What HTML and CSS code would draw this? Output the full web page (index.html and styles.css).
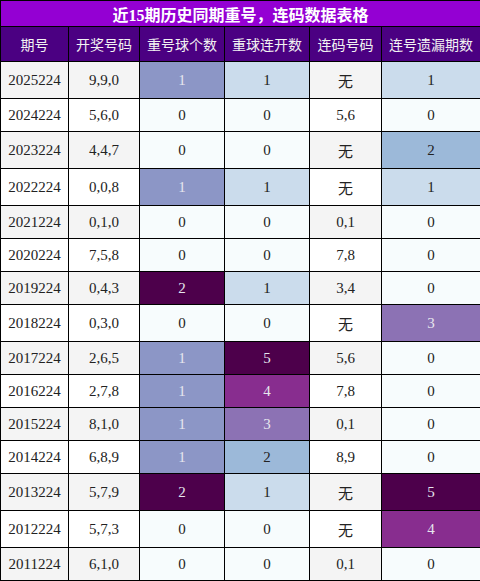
FILE: index.html
```html
<!DOCTYPE html>
<html lang="zh">
<head>
    <meta charset="UTF-8">
    <meta name="viewport" content="width=device-width, initial-scale=1.0">
    <title>近15期历史同期重号，连码数据表格</title>
    <link rel="stylesheet" href="styles.css">
</head>
<body>
<table class="data-table">
    <colgroup>
        <col class="c-issue">
        <col class="c-draw">
        <col class="c-repeat">
        <col class="c-streak">
        <col class="c-pair">
        <col class="c-miss">
    </colgroup>
    <thead>
        <tr><th class="title" colspan="6">近15期历史同期重号，连码数据表格</th></tr>
        <tr class="head">
            <th>期号</th>
            <th>开奖号码</th>
            <th>重号球个数</th>
            <th>重球连开数</th>
            <th>连码号码</th>
            <th>连号遗漏期数</th>
        </tr>
    </thead>
    <tbody>
        <tr><td>2025224</td><td>9,9,0</td><td class="b4 lt">1</td><td class="s1">1</td><td>无</td><td class="s1">1</td></tr>
        <tr><td>2024224</td><td>5,6,0</td><td class="z">0</td><td class="z">0</td><td>5,6</td><td class="z">0</td></tr>
        <tr><td>2023224</td><td>4,4,7</td><td class="z">0</td><td class="z">0</td><td>无</td><td class="s2">2</td></tr>
        <tr><td>2022224</td><td>0,0,8</td><td class="b4 lt">1</td><td class="s1">1</td><td>无</td><td class="s1">1</td></tr>
        <tr><td>2021224</td><td>0,1,0</td><td class="z">0</td><td class="z">0</td><td>0,1</td><td class="z">0</td></tr>
        <tr><td>2020224</td><td>7,5,8</td><td class="z">0</td><td class="z">0</td><td>7,8</td><td class="z">0</td></tr>
        <tr><td>2019224</td><td>0,4,3</td><td class="s5 lt">2</td><td class="s1">1</td><td>3,4</td><td class="z">0</td></tr>
        <tr><td>2018224</td><td>0,3,0</td><td class="z">0</td><td class="z">0</td><td>无</td><td class="s3 lt">3</td></tr>
        <tr><td>2017224</td><td>2,6,5</td><td class="b4 lt">1</td><td class="s5 lt">5</td><td>5,6</td><td class="z">0</td></tr>
        <tr><td>2016224</td><td>2,7,8</td><td class="b4 lt">1</td><td class="s4 lt">4</td><td>7,8</td><td class="z">0</td></tr>
        <tr><td>2015224</td><td>8,1,0</td><td class="b4 lt">1</td><td class="s3 lt">3</td><td>0,1</td><td class="z">0</td></tr>
        <tr><td>2014224</td><td>6,8,9</td><td class="b4 lt">1</td><td class="s2">2</td><td>8,9</td><td class="z">0</td></tr>
        <tr><td>2013224</td><td>5,7,9</td><td class="s5 lt">2</td><td class="s1">1</td><td>无</td><td class="s5 lt">5</td></tr>
        <tr><td>2012224</td><td>5,7,3</td><td class="z">0</td><td class="z">0</td><td>无</td><td class="s4 lt">4</td></tr>
        <tr><td>2011224</td><td>6,1,0</td><td class="z">0</td><td class="z">0</td><td>0,1</td><td class="z">0</td></tr>
    </tbody>
</table>
</body>
</html>
```
FILE: styles.css
```css
body {
    margin: 0;
    background: #fff;
    font-family: "Liberation Serif", "Noto Sans CJK SC", serif;
    color: #222;
}
.data-table {
    width: 480px;
    border-collapse: collapse;
    table-layout: fixed;
}
.c-issue  { width: 68px; }
.c-draw   { width: 71px; }
.c-repeat { width: 85px; }
.c-streak { width: 85px; }
.c-pair   { width: 72px; }
.c-miss   { width: 99px; }
.data-table th,
.data-table td {
    border: 1px solid #000;
    text-align: center;
}
.title {
    background: #9400d3;
    color: #fff;
    font-size: 16px;
    font-weight: bold;
    padding: 1px 0 0;
}
.head th {
    background: #4b0082;
    color: #f2f2f2;
    font-family: "Noto Sans CJK SC", sans-serif;
    font-size: 14px;
    font-weight: normal;
    padding: 7px 2px;
}
.data-table td {
    font-size: 15px;
    padding: 7.5px 2px;
    background: #fff;
}
tbody tr:nth-child(odd) td { background: #f4f4f4; }

/* heat colours */
.data-table td.z  { background: #f7fcfd; }
.data-table td.s1 { background: #cbdcec; }
.data-table td.s2 { background: #9cb9d9; }
.data-table td.s3 { background: #8c72b4; }
.data-table td.s4 { background: #882d8f; }
.data-table td.s5 { background: #4d004b; }
.data-table td.b4 { background: #8c96c6; }
.data-table td.lt { color: #e6e6ee; }
```
